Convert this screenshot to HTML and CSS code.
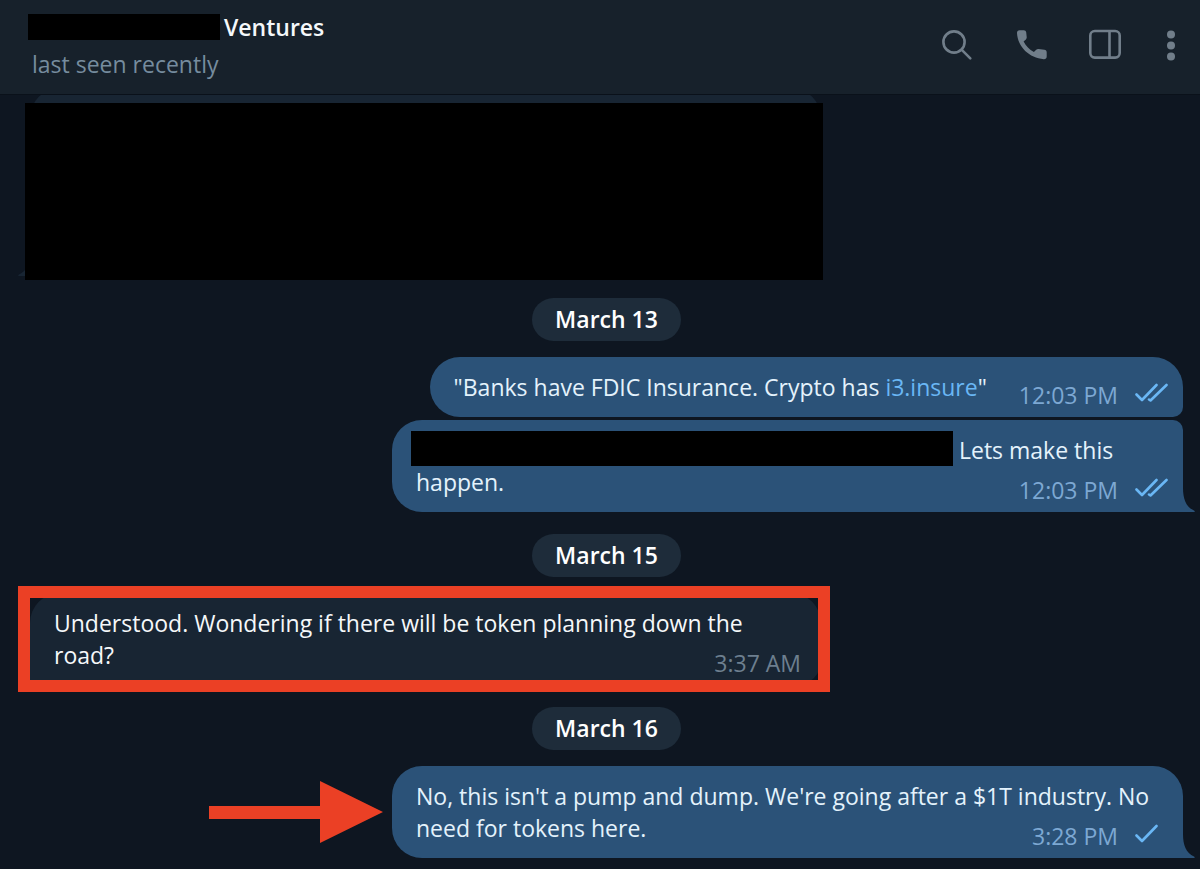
FILE: index.html
```html
<!DOCTYPE html>
<html lang="en">
<head>
    <meta charset="UTF-8">
    <meta name="viewport" content="width=device-width, initial-scale=1.0">
    <title>Chat</title>
    <link rel="stylesheet" href="styles.css">
</head>
<body>
    <header class="topbar">
        <div class="peer">
            <h1 class="peer-name"><span class="redacted redacted-name"></span>Ventures</h1>
            <p class="peer-status">last seen recently</p>
        </div>
        <nav class="actions">
            <button type="button" class="icon-btn" aria-label="Search">
                <svg width="32" height="32" viewBox="0 0 32 32" fill="none" stroke="currentColor" stroke-width="2.6" stroke-linecap="round">
                    <circle cx="13" cy="13" r="10.6"/>
                    <path d="M20.8 20.8 29.3 29.3"/>
                </svg>
            </button>
            <button type="button" class="icon-btn" aria-label="Call">
                <svg width="32" height="32" viewBox="0 0 32 32" fill="currentColor">
                    <path d="M4.6 1.2h4.2c1.3 0 2.2.8 2.4 2.1l.5 4.8c.1 1-.1 1.700-.8 2.400l-2.300 2.100c2.400 4.700 5.700 8.100 10.300 10.400l2.300-2.200c.6-.6 1.400-.9 2.300-.8l5.900.7c1.400.2 2.300 1.100 2.300 2.500v4.200c0 1.800-1.200 2.900-2.900 2.800C14.400 29.400 2.600 17.800 2 4.100 1.900 2.300 2.900 1.200 4.600 1.200z"/>
                </svg>
            </button>
            <button type="button" class="icon-btn" aria-label="Toggle info panel">
                <svg width="32" height="32" viewBox="0 0 32 32" fill="none" stroke="currentColor" stroke-width="2.6">
                    <rect x="1.3" y="2" width="29.400" height="26.600" rx="4.500"/>
                    <path d="M20.500 2v26.600"/>
                </svg>
            </button>
            <button type="button" class="icon-btn" aria-label="More">
                <svg width="16" height="32" viewBox="0 0 16 32" fill="currentColor">
                    <circle cx="8" cy="5.500" r="4"/>
                    <circle cx="8" cy="16.500" r="4"/>
                    <circle cx="8" cy="27.500" r="4"/>
                </svg>
            </button>
        </nav>
    </header>

    <main class="chat">
        <div class="message in hidden-message">
            <svg class="tail tail-left" width="12" height="24" viewBox="0 0 12 24"><path d="M12 0C12 11 9 19 1 22.500 0 23 0 24 1 24H12z"/></svg>
            <div class="redacted redacted-message"></div>
        </div>

        <div class="date">March 13</div>

        <div class="message out group-start">
            "Banks have FDIC Insurance. Crypto has <a href="#">i3.insure</a>"
            <span class="meta">12:03 PM
                <svg class="ticks" width="33" height="20" viewBox="0 0 33 20">
                    <path d="M1.500 11.500 7 17 21.500 2M14 16.500 15.500 17.500 31.500 2"/>
                </svg>
            </span>
        </div>
        <div class="message out group-end">
            <span class="redacted redacted-line"></span> Lets make this happen.
            <span class="meta">12:03 PM
                <svg class="ticks" width="33" height="20" viewBox="0 0 33 20">
                    <path d="M1.500 11.500 7 17 21.500 2M14 16.500 15.500 17.500 31.500 2"/>
                </svg>
            </span>
            <svg class="tail" width="12" height="24" viewBox="0 0 12 24"><path d="M0 0C0 11 3 19 11 22.500 12 23 12 24 11 24H0z"/></svg>
        </div>

        <div class="date">March 15</div>

        <div class="message in highlighted">
            Understood. Wondering if there will be token planning down the road?
            <span class="meta">3:37 AM</span>
        </div>

        <div class="date">March 16</div>

        <div class="message out">
            <svg class="arrow" width="174" height="62" viewBox="0 0 174 62"><path d="M0 25h111V0l63 31-63 31V38H0z"/></svg>
            No, this isn't a pump and dump. We're going after a $1T industry. No need for tokens here.
            <span class="meta">3:28 PM
                <svg class="ticks" width="33" height="20" viewBox="0 0 33 20">
                    <path d="M1.500 11.500 7 17 21.500 2"/>
                </svg>
            </span>
            <svg class="tail" width="12" height="24" viewBox="0 0 12 24"><path d="M0 0C0 11 3 19 11 22.500 12 23 12 24 11 24H0z"/></svg>
        </div>
    </main>
</body>
</html>
```
FILE: styles.css
```css
* {
    box-sizing: border-box;
}
body {
    margin: 0;
    min-height: 100vh;
    background-color: #0e1621;
    color: #f5f8fa;
    font-family: "Open Sans", "Noto Sans", sans-serif;
    font-size: 23px;
    line-height: 32px;
}
.topbar {
    position: relative;
    z-index: 1;
    display: flex;
    justify-content: space-between;
    height: 95px;
    padding: 11px 21px 0 28px;
    background-color: #17212b;
    border-bottom: 1px solid #0a111a;
}
.peer-name {
    display: flex;
    gap: 4px;
    margin: 0;
    font-size: 23px;
    font-weight: 600;
}
.peer-status {
    margin: 5px 0 0 4px;
    color: #768c9e;
}
.actions {
    display: flex;
    align-items: flex-start;
    gap: 42px;
    padding-top: 18px;
}
.icon-btn {
    padding: 0;
    border: none;
    background: none;
    color: #717e8a;
    cursor: pointer;
}
.icon-btn svg {
    display: block;
}
.redacted {
    background-color: #000;
}
.redacted-name {
    width: 192px;
    height: 26px;
    margin-top: 3px;
}
.chat {
    display: flex;
    flex-direction: column;
    align-items: flex-start;
    padding: 0 17px 11px 30px;
}
.date {
    align-self: center;
    margin: 22px 0 16px;
    padding: 5px 23px 6px;
    border-radius: 22px;
    background-color: #1e2c3a;
    color: #fff;
    font-weight: 600;
}
.message {
    position: relative;
    max-width: 791px;
    padding: 14px 20px 14px 24px;
    border-radius: 30px;
}
.in {
    background-color: #182533;
    border-bottom-left-radius: 0;
}
.out {
    align-self: flex-end;
    background-color: #2b5278;
    color: #e4f2fc;
    border-bottom-right-radius: 0;
}
.out a {
    color: #6ab7f5;
    text-decoration: none;
}
.group-start {
    margin-bottom: 3px;
    border-bottom-right-radius: 10px;
}
.group-end {
    border-top-right-radius: 10px;
}
.meta {
    float: right;
    position: relative;
    top: 8px;
    margin-left: 32px;
    color: #6d7f8f;
}
.out .meta {
    display: flex;
    align-items: center;
    gap: 17px;
    margin-right: -5px;
    color: #7da8d3;
}
.ticks {
    margin-top: -4px;
    fill: none;
    stroke: #6ab7f5;
    stroke-width: 2.6;
    stroke-linecap: round;
    stroke-linejoin: round;
}
.tail {
    position: absolute;
    left: 100%;
    bottom: 0;
    fill: #2b5278;
}
.tail-left {
    right: 100%;
    left: auto;
    fill: #182533;
}
.arrow {
    position: absolute;
    right: 100%;
    top: 15px;
    margin-right: 9px;
    fill: #eb4025;
}

/* first message sits partly under the top bar and is blacked out */
.hidden-message {
    width: 100%;
    height: 188px;
    margin-top: -7px;
}
.redacted-message {
    position: absolute;
    top: 15px;
    right: -2px;
    bottom: -4px;
    left: -5px;
}
.redacted-line {
    display: inline-block;
    width: 542px;
    height: 35px;
    margin: -3px 0 0 -5px;
    vertical-align: top;
}
.highlighted {
    border-bottom-right-radius: 24px;
}
.highlighted::after {
    content: "";
    position: absolute;
    top: -7px;
    right: -9px;
    bottom: -7px;
    left: -12px;
    border: 12px solid #eb4025;
}
```
